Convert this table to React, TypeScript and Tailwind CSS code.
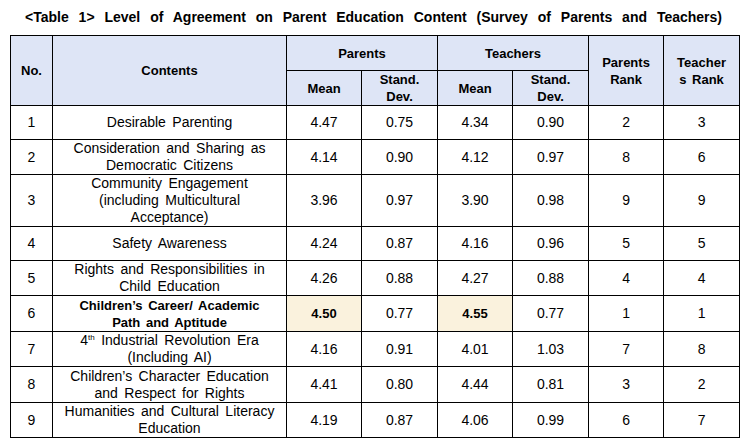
import React from "react";

type Row = {
  no: string;
  content: React.ReactNode;
  pm: string;
  ps: string;
  tm: string;
  ts: string;
  pr: string;
  tr: string;
  h: string;
  bold?: boolean;
};

const rows: Row[] = [
  { no: "1", content: <>Desirable Parenting</>, pm: "4.47", ps: "0.75", tm: "4.34", ts: "0.90", pr: "2", tr: "3", h: "h-[34px]" },
  { no: "2", content: <>Consideration and Sharing as<br />Democratic Citizens</>, pm: "4.14", ps: "0.90", tm: "4.12", ts: "0.97", pr: "8", tr: "6", h: "h-[35px]" },
  { no: "3", content: <>Community Engagement<br />(including Multicultural<br />Acceptance)</>, pm: "3.96", ps: "0.97", tm: "3.90", ts: "0.98", pr: "9", tr: "9", h: "h-[52px]" },
  { no: "4", content: <>Safety Awareness</>, pm: "4.24", ps: "0.87", tm: "4.16", ts: "0.96", pr: "5", tr: "5", h: "h-[34px]" },
  { no: "5", content: <>Rights and Responsibilities in<br />Child Education</>, pm: "4.26", ps: "0.88", tm: "4.27", ts: "0.88", pr: "4", tr: "4", h: "h-[35px]" },
  { no: "6", content: <>Children’s Career/ Academic<br />Path and Aptitude</>, pm: "4.50", ps: "0.77", tm: "4.55", ts: "0.77", pr: "1", tr: "1", h: "h-[36px]", bold: true },
  { no: "7", content: <>4<sup className="text-[8px] -top-[5px]">th</sup> Industrial Revolution Era<br />(Including AI)</>, pm: "4.16", ps: "0.91", tm: "4.01", ts: "1.03", pr: "7", tr: "8", h: "h-[35px]" },
  { no: "8", content: <>Children’s Character Education<br />and Respect for Rights</>, pm: "4.41", ps: "0.80", tm: "4.44", ts: "0.81", pr: "3", tr: "2", h: "h-[36px]" },
  { no: "9", content: <>Humanities and Cultural Literacy<br />Education</>, pm: "4.19", ps: "0.87", tm: "4.06", ts: "0.99", pr: "6", tr: "7", h: "h-[35px]" },
];

const cell = "border border-black text-center align-middle p-0";
const hdr = "border border-black text-center align-middle p-0 bg-[#dee5f6] font-bold text-[13px] leading-[17px] [word-spacing:2px]";
const bld = "font-bold text-[13px] leading-[17px] [word-spacing:2px]";
const hi = "bg-[#faf2dd]";

export default function App() {
  return (
    <div className="w-[749px] h-[446px] bg-white text-black font-['Liberation_Sans',Arial,sans-serif] text-[14px] leading-[17px] [word-spacing:2.5px]">
      <div className="h-[35px] pl-[25px] pt-[9px] text-[14px] leading-[17px] font-bold [word-spacing:6px] whitespace-nowrap">
        &lt;Table 1&gt; Level of Agreement on Parent Education Content (Survey of Parents and Teachers)
      </div>
      <table className="ml-[10px] table-fixed border-collapse w-[730px]">
        <colgroup>
          <col className="w-[42px]" />
          <col className="w-[234px]" />
          <col className="w-[75px]" />
          <col className="w-[76px]" />
          <col className="w-[75px]" />
          <col className="w-[76px]" />
          <col className="w-[75px]" />
          <col className="w-[76px]" />
        </colgroup>
        <thead>
          <tr className="h-[35px]">
            <th rowSpan={2} className={hdr}>No.</th>
            <th rowSpan={2} className={hdr}>Contents</th>
            <th colSpan={2} className={hdr}>Parents</th>
            <th colSpan={2} className={hdr}>Teachers</th>
            <th rowSpan={2} className={hdr}>Parents<br />Rank</th>
            <th rowSpan={2} className={hdr}>Teacher<br />s Rank</th>
          </tr>
          <tr className="h-[34px]">
            <th className={hdr}>Mean</th>
            <th className={hdr}>Stand.<br />Dev.</th>
            <th className={hdr}>Mean</th>
            <th className={hdr}>Stand.<br />Dev.</th>
          </tr>
        </thead>
        <tbody>
          {rows.map((r) => (
            <tr key={r.no} className={r.h}>
              <td className={cell}>{r.no}</td>
              <td className={`${cell} ${r.bold ? bld : ""}`}>{r.content}</td>
              <td className={`${cell} ${r.bold ? `${hi} ${bld}` : ""}`}>{r.pm}</td>
              <td className={cell}>{r.ps}</td>
              <td className={`${cell} ${r.bold ? `${hi} ${bld}` : ""}`}>{r.tm}</td>
              <td className={cell}>{r.ts}</td>
              <td className={cell}>{r.pr}</td>
              <td className={cell}>{r.tr}</td>
            </tr>
          ))}
        </tbody>
      </table>
    </div>
  );
}
